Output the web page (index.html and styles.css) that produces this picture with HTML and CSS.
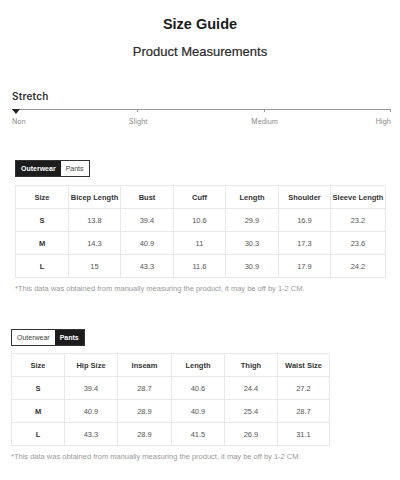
FILE: index.html
```html
<!DOCTYPE html>
<html>
<head>
<meta charset="utf-8">
<link rel="stylesheet" href="styles.css">
</head>
<body>
<div class="page">
  <h1 class="title">Size Guide</h1>
  <h2 class="subtitle">Product Measurements</h2>

  <section class="stretch">
    <div class="stretch-label">Stretch</div>
    <div class="track">
      <span class="marker"></span>
      <div class="seg"></div><div class="seg"></div><div class="seg"></div>
    </div>
    <div class="scale-labels">
      <span class="lbl l-non">Non</span>
      <span class="lbl l-slight">Slight</span>
      <span class="lbl l-medium">Medium</span>
      <span class="lbl l-high">High</span>
    </div>
  </section>

  <section class="block block-a">
    <div class="tabs">
      <span class="tab active">Outerwear</span>
      <span class="tab">Pants</span>
    </div>
    <table class="sizes sizes-a">
      <colgroup>
        <col class="c53"><col class="c52"><col class="c53"><col class="c52"><col class="c53"><col class="c52"><col class="c55">
      </colgroup>
      <thead>
        <tr><th>Size</th><th>Bicep Length</th><th>Bust</th><th>Cuff</th><th>Length</th><th>Shoulder</th><th>Sleeve Length</th></tr>
      </thead>
      <tbody>
        <tr><th>S</th><td>13.8</td><td>39.4</td><td>10.6</td><td>29.9</td><td>16.9</td><td>23.2</td></tr>
        <tr><th>M</th><td>14.3</td><td>40.9</td><td>11</td><td>30.3</td><td>17.3</td><td>23.6</td></tr>
        <tr><th>L</th><td>15</td><td>43.3</td><td>11.6</td><td>30.9</td><td>17.9</td><td>24.2</td></tr>
      </tbody>
    </table>
    <p class="note">*This data was obtained from manually measuring the product, it may be off by 1-2 CM.</p>
  </section>

  <section class="block block-b">
    <div class="tabs">
      <span class="tab">Outerwear</span>
      <span class="tab active">Pants</span>
    </div>
    <table class="sizes sizes-b">
      <colgroup>
        <col class="c53"><col class="c53"><col class="c54"><col class="c53"><col class="c53"><col class="c52">
      </colgroup>
      <thead>
        <tr><th>Size</th><th>Hip Size</th><th>Inseam</th><th>Length</th><th>Thigh</th><th>Waist Size</th></tr>
      </thead>
      <tbody>
        <tr><th>S</th><td>39.4</td><td>28.7</td><td>40.6</td><td>24.4</td><td>27.2</td></tr>
        <tr><th>M</th><td>40.9</td><td>28.9</td><td>40.9</td><td>25.4</td><td>28.7</td></tr>
        <tr><th>L</th><td>43.3</td><td>28.9</td><td>41.5</td><td>26.9</td><td>31.1</td></tr>
      </tbody>
    </table>
    <p class="note">*This data was obtained from manually measuring the product, it may be off by 1-2 CM.</p>
  </section>
</div>
</body>
</html>
```

FILE: styles.css
```css
html, body {
  margin: 0;
  padding: 0;
  background: #ffffff;
}
body {
  font-family: "Liberation Sans", Arial, sans-serif;
  color: #333;
  width: 400px;
  height: 480px;
  overflow: hidden;
}
.page {
  padding-top: 16px;
}
.title {
  margin: 0;
  font-size: 14.5px;
  line-height: 16px;
  font-weight: bold;
  text-align: center;
  color: #1a1a1a;
}
.subtitle {
  margin: 12px 0 0;
  font-size: 13px;
  line-height: 16px;
  font-weight: normal;
  text-align: center;
  color: #2a2a2a;
  -webkit-text-stroke: 0.2px #2a2a2a;
}
.stretch {
  margin: 30px 9px 0 12px;
}
.stretch-label {
  font-family: Inter, "Liberation Sans", sans-serif;
  font-size: 10px;
  line-height: 12px;
  font-weight: 600;
  color: #333;
  letter-spacing: 0.2px;
}
.track {
  position: relative;
  margin-top: 7px;
  border-top: 1px solid #999;
  display: grid;
  grid-template-columns: 1fr 1fr 1fr;
}
.seg {
  height: 2px;
  border-right: 1px solid #999;
}
.marker {
  position: absolute;
  left: 0;
  top: -1px;
  width: 0;
  height: 0;
  border-left: 4px solid transparent;
  border-right: 4px solid transparent;
  border-top: 5px solid #222;
}
.scale-labels {
  display: grid;
  grid-template-columns: repeat(6, 1fr);
  margin-top: 5px;
  font-family: Inter, "Liberation Sans", sans-serif;
  font-size: 7px;
  line-height: 9px;
  color: #888;
}
.l-non { grid-column: 1; text-align: left; }
.l-slight { grid-column: 2 / span 2; text-align: center; }
.l-medium { grid-column: 4 / span 2; text-align: center; }
.l-high { grid-column: 6; text-align: right; }

.block-a {
  margin: 31px 0 0 15px;
}
.block-b {
  margin: 32px 0 0 11px;
}
.tabs {
  display: inline-flex;
  border: 1px solid #333;
  height: 15px;
}
.tab {
  font-size: 7px;
  line-height: 15px;
  padding: 0 5px;
  color: #444;
  background: #fff;
}
.tab.active {
  background: #1c1c1c;
  color: #fff;
  font-weight: bold;
}
.sizes {
  margin-top: 8px;
  border-collapse: collapse;
  table-layout: fixed;
  border: 1px solid #e8e8e8;
}
.sizes-a { width: 370px; }
.sizes-b { width: 318px; margin-top: 7px; }
.c52 { width: 52px; }
.c53 { width: 53px; }
.c54 { width: 54px; }
.c55 { width: 55px; }
.sizes th, .sizes td {
  border: 1px solid #e8e8e8;
  height: 22px;
  padding: 0;
  text-align: center;
  font-size: 7.5px;
  white-space: nowrap;
}
.sizes th {
  font-weight: bold;
  color: #333;
}
.sizes td {
  color: #555;
}
.note {
  margin: 6px 0 0;
  font-size: 7.5px;
  line-height: 10px;
  color: #999;
}
```
